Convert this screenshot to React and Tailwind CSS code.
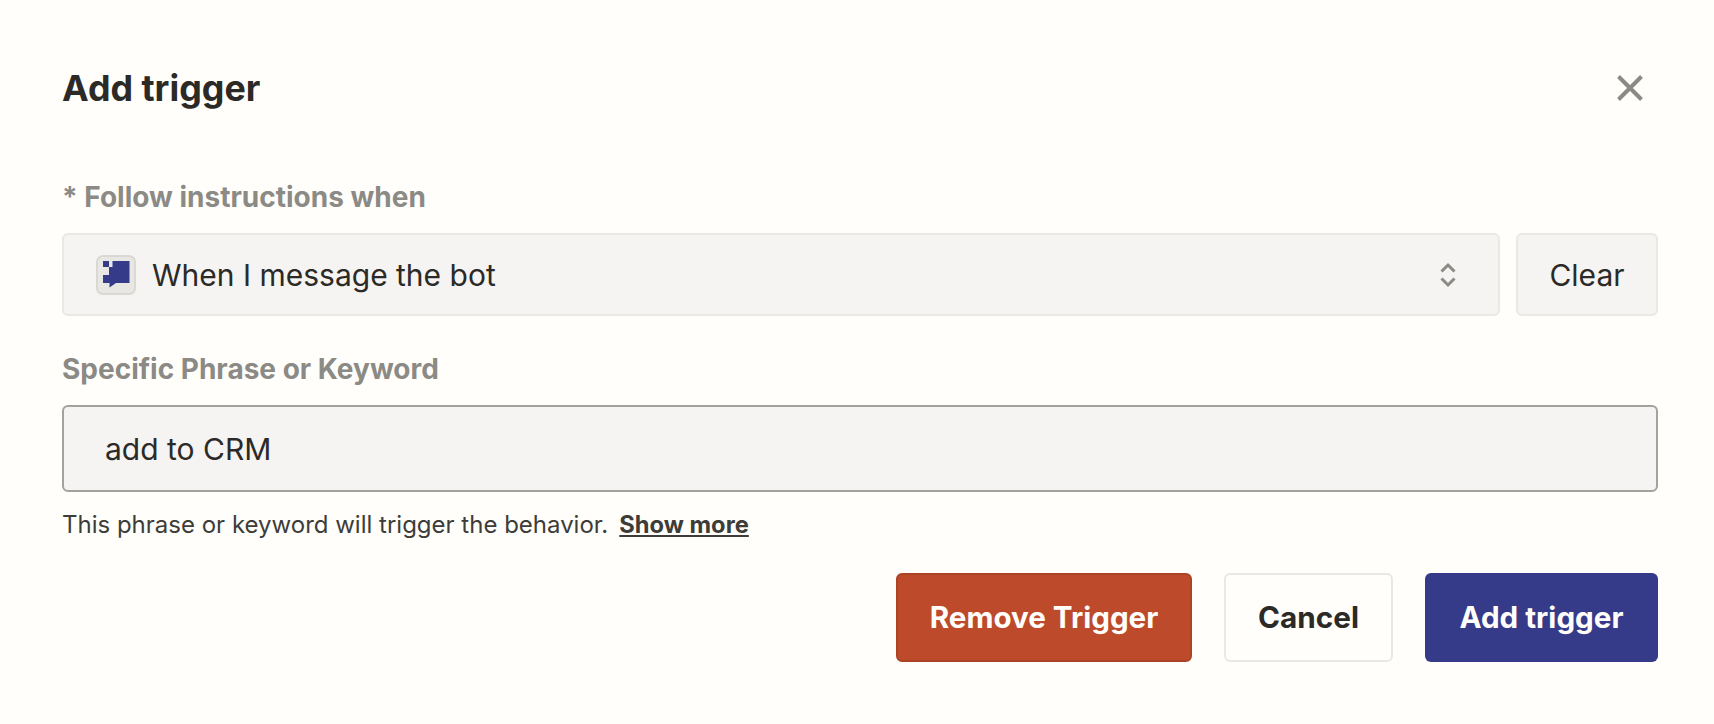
const App = () => {
  return (
    <div className="min-h-[724px] bg-[#fffefb] pl-[62px] pr-[56px] pt-[64px] font-['Inter',sans-serif] text-[#2b2a27]">
      <div className="flex h-[48px] items-center justify-between">
        <h2 className="text-[35.8px] font-bold leading-[48px]">Add trigger</h2>
        <button className="mr-[14px] text-[#8b8a85]">
          <svg width="28" height="28" viewBox="0 0 28 28" fill="none" className="block">
            <path d="M2.5 2.5L25.5 25.5M25.5 2.5L2.5 25.5" stroke="currentColor" strokeWidth="4" />
          </svg>
        </button>
      </div>

      <div className="mt-[67px] text-[28px] font-bold leading-[36px] text-[#8b8a85]">
        * Follow instructions when
      </div>
      <div className="mt-[18px] flex gap-[16px]">
        <div className="flex h-[83px] flex-1 items-center rounded-[6px] border-2 border-[#e9e8e4] bg-[#f5f4f2] pl-[32px] pr-[41px]">
          <div className="flex h-[40px] w-[40px] items-center justify-center rounded-[7px] border-2 border-[#d9d8d3] bg-[#e8e7e4]">
            <svg width="27" height="27" viewBox="0 0 27 27" className="block">
              <path d="M0 0H6V6H0Z M9.5 0H26.5V22H13L6.5 26.5V22H0V14H6V6H9.5Z" fill="#353b89" />
            </svg>
          </div>
          <span className="ml-[16px] flex-1 pt-[1px] text-[30px] leading-[40px]">When I message the bot</span>
          <svg width="18" height="28" viewBox="0 0 18 28" fill="none" className="block text-[#8b8a85]">
            <path d="M2.5 10.5L9 4L15.5 10.5M2.5 17.5L9 24L15.5 17.5" stroke="currentColor" strokeWidth="3" />
          </svg>
        </div>
        <button className="h-[83px] w-[142px] rounded-[6px] border-2 border-[#e9e8e4] bg-[#f5f4f2] pt-[2px] text-[30px]">
          Clear
        </button>
      </div>

      <div className="mt-[35px] text-[28px] font-bold leading-[36px] text-[#8b8a85]">
        Specific Phrase or Keyword
      </div>
      <div className="mt-[18px] flex h-[87px] items-center rounded-[6px] border-2 border-[#a3a29d] bg-[#f5f4f2] pl-[41px] pt-[2px] text-[30px]">
        add to CRM
      </div>
      <p className="mt-[19px] text-[24px] leading-[28px] text-[#3d3c38]">
        This phrase or keyword will trigger the behavior.
        <span className="ml-[11px] text-[23.7px] font-bold underline">Show more</span>
      </p>

      <div className="mt-[34px] flex justify-end">
        <button className="h-[89px] w-[296px] rounded-[6px] border-2 border-[#ad4325] bg-[#bc4a2b] text-[29.6px] font-bold text-[#fffefb]">
          Remove Trigger
        </button>
        <button className="ml-[32px] h-[89px] w-[169px] rounded-[6px] border-2 border-[#e9e8e4] text-[29.7px] font-bold">
          Cancel
        </button>
        <button className="ml-[32px] h-[89px] w-[233px] rounded-[6px] bg-[#353b89] text-[29.6px] font-bold text-[#fffefb]">
          Add trigger
        </button>
      </div>
    </div>
  );
};

export default App;
